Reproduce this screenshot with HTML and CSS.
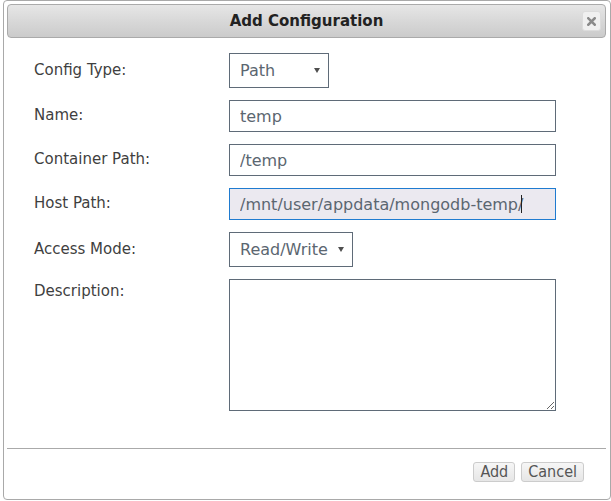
FILE: index.html
```html
<!DOCTYPE html>
<html>
<head>
<meta charset="utf-8">
<link rel="stylesheet" href="styles.css">
</head>
<body>
<div class="dialog">
  <div class="titlebar">
    <span class="title">Add Configuration</span>
    <button class="close" type="button" aria-label="close">
      <svg width="9" height="9" viewBox="0 0 9 9"><path d="M1.3 1.3 L7.7 7.7 M7.7 1.3 L1.3 7.7" stroke="#8a8a8a" stroke-width="2.6" stroke-linecap="square"/></svg>
    </button>
  </div>
  <form class="content">
    <div class="row">
      <label class="label">Config Type:</label>
      <span class="select-wrap w-path"><select class="select"><option>Path</option></select><span class="arrow"></span></span>
    </div>
    <div class="row">
      <label class="label">Name:</label>
      <input class="input" type="text" value="temp">
    </div>
    <div class="row">
      <label class="label">Container Path:</label>
      <input class="input" type="text" value="/temp">
    </div>
    <div class="row">
      <label class="label">Host Path:</label>
      <span class="input-wrap"><input class="input focused" type="text" value="/mnt/user/appdata/mongodb-temp/"><span class="caret"></span></span>
    </div>
    <div class="row">
      <label class="label">Access Mode:</label>
      <span class="select-wrap w-mode"><select class="select"><option>Read/Write</option></select><span class="arrow"></span></span>
    </div>
    <div class="row row-top">
      <label class="label label-top">Description:</label>
      <textarea class="textarea"></textarea>
    </div>
  </form>
  <div class="buttonpane">
    <button class="btn" type="button">Add</button>
    <button class="btn" type="button">Cancel</button>
  </div>
</div>
</body>
</html>
```
FILE: styles.css
```css
html, body {
  margin: 0;
  padding: 0;
  background: #ffffff;
}

.dialog {
  box-sizing: border-box;
  width: 608px;
  height: 500px;
  margin-left: 3px;
  border: 1px solid #a9a9a9;
  border-radius: 4px;
  padding: 3px 4px 0 3px;
  display: flex;
  flex-direction: column;
  background: #ffffff;
}

.titlebar {
  position: relative;
  box-sizing: border-box;
  height: 34px;
  flex: none;
  border: 1px solid #aaaaaa;
  border-radius: 4px;
  background: linear-gradient(to bottom, #e6e6e6 0%, #d8d8d8 50%, #cbcbcb 100%);
  display: flex;
  align-items: center;
  justify-content: center;
}

.title {
  font-family: "DejaVu Sans", sans-serif;
  font-weight: bold;
  font-size: 15px;
  color: #222222;
}

.close {
  position: absolute;
  right: 4px;
  top: 6px;
  box-sizing: border-box;
  width: 19px;
  height: 20px;
  padding: 0;
  border: 1px solid #dcdcdc;
  border-radius: 3px;
  background: #f0f0f0;
  display: flex;
  align-items: center;
  justify-content: center;
}

.content {
  flex: 1;
  margin: 0;
  padding: 15px 0 0 27px;
  display: flex;
  flex-direction: column;
  gap: 12px;
}

.row {
  display: flex;
  align-items: center;
}

.row-top {
  align-items: flex-start;
}

.label {
  width: 195px;
  flex: none;
  font-family: "DejaVu Sans", sans-serif;
  font-size: 15px;
  line-height: 18px;
  color: #3f3f3f;
  margin-top: -2px;
}

.label-top {
  margin-top: 3px;
}

.select-wrap {
  position: relative;
  display: inline-block;
}

.w-path .select { width: 100px; }
.w-mode .select { width: 124px; }

.select {
  appearance: none;
  -webkit-appearance: none;
  box-sizing: border-box;
  height: 35px;
  margin: 0;
  padding: 0 10px;
  border: 1px solid #5f6b78;
  border-radius: 0;
  background: #ffffff;
  font-family: "DejaVu Sans", sans-serif;
  font-size: 16px;
  color: #5b6670;
  outline: none;
}

.arrow {
  position: absolute;
  right: 9px;
  top: 15px;
  width: 0;
  height: 0;
  border-left: 3px solid transparent;
  border-right: 3px solid transparent;
  border-top: 5px solid #4f4f4f;
}

.input {
  box-sizing: border-box;
  width: 327px;
  height: 32px;
  margin: 0;
  padding: 0 10px;
  border: 1px solid #5f6b78;
  border-radius: 0;
  background: #ffffff;
  font-family: "DejaVu Sans", sans-serif;
  font-size: 16px;
  color: #5b6670;
  outline: none;
}

.input-wrap {
  position: relative;
  display: inline-block;
}

.input.focused {
  border-color: #1f7bd0;
  background: #ebe9f0;
}

.caret {
  position: absolute;
  left: 292px;
  top: 7px;
  width: 1px;
  height: 18px;
  background: #222222;
}

.textarea {
  box-sizing: border-box;
  width: 327px;
  height: 132px;
  margin: 0;
  border: 1px solid #5f6b78;
  border-radius: 0;
  background: #ffffff;
  outline: none;
}

.buttonpane {
  flex: none;
  box-sizing: border-box;
  height: 51px;
  border-top: 1px solid #aaaaaa;
  padding: 13px 22px 0 0;
  display: flex;
  justify-content: flex-end;
  align-items: flex-start;
  gap: 6px;
}

.btn {
  box-sizing: border-box;
  height: 20px;
  margin: 0;
  padding: 0 6px;
  border: 1px solid #cccccc;
  border-radius: 3px;
  background: linear-gradient(to bottom, #f6f6f6, #e6e6e6);
  font-family: "DejaVu Sans Condensed", "DejaVu Sans", sans-serif;
  font-stretch: condensed;
  font-size: 16px;
  line-height: 18px;
  color: #555555;
}
```
